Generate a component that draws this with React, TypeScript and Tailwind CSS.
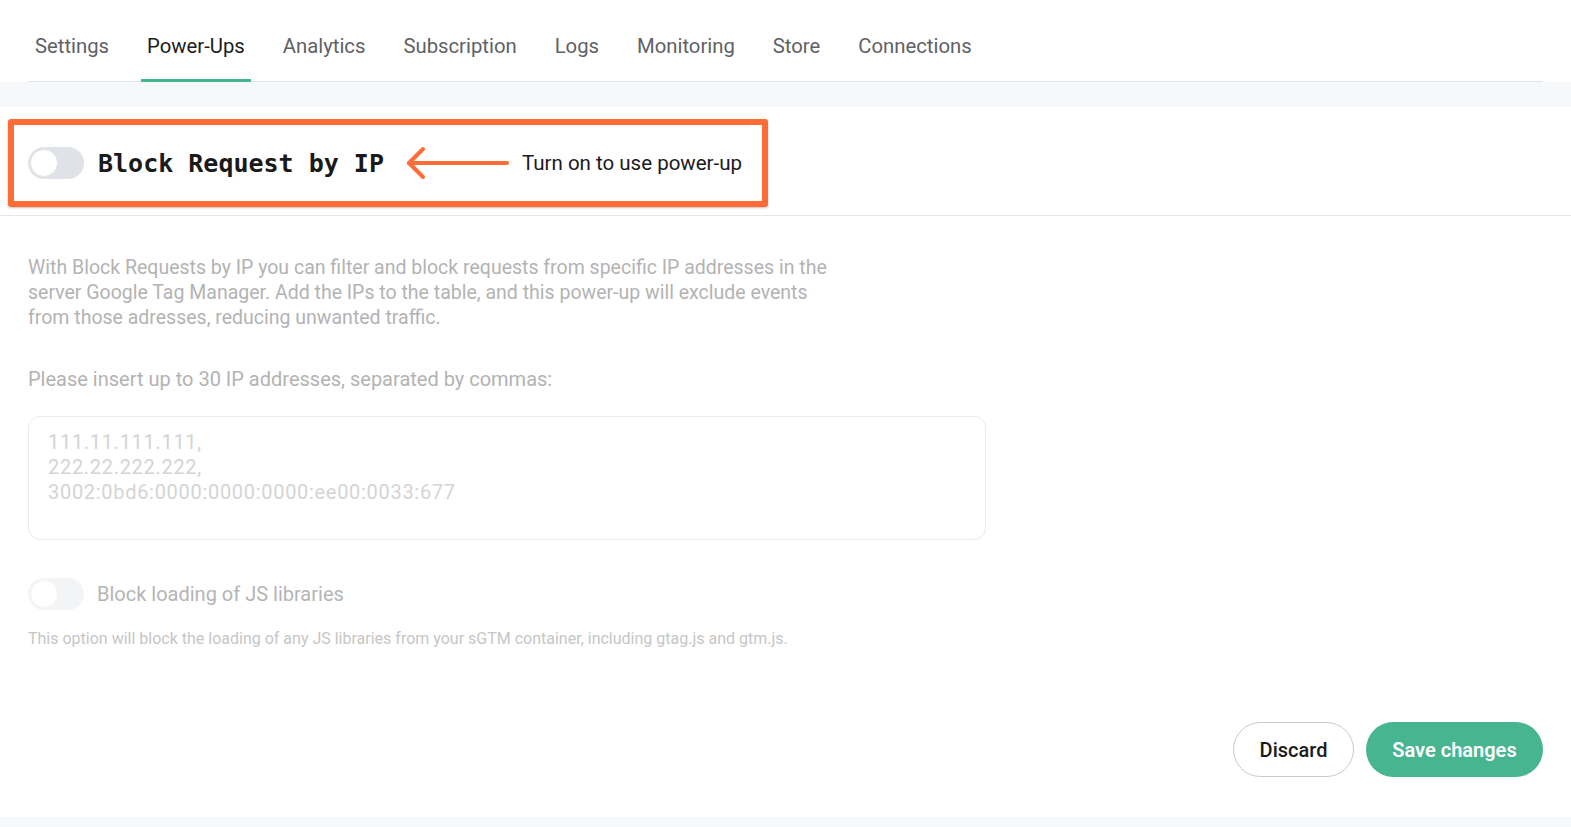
import React from "react";

const tabs = [
	"Settings",
	"Power-Ups",
	"Analytics",
	"Subscription",
	"Logs",
	"Monitoring",
	"Store",
	"Connections",
];

function Toggle({ faded }: { faded?: boolean }) {
	return (
		<div
			className={`w-[56px] h-[32px] rounded-full flex items-center px-[2px] shrink-0 ${
				faded ? "bg-[#f3f4f5]" : "bg-[#dfe2e6]"
			}`}
		>
			<div
				className={`w-[28px] h-[28px] rounded-full bg-white border ${
					faded ? "border-[#f3f4f5]" : "border-[#e4e6e9]"
				}`}
			></div>
		</div>
	);
}

export default function App() {
	return (
		<div
			className="h-[827px] w-full flex flex-col bg-white"
			style={{ fontFamily: "Roboto, 'Noto Sans', sans-serif" }}
		>
			{/* tabs */}
			<div className="mx-[28px] border-b border-[#e3e5e8] flex gap-[26px] pl-px">
				{tabs.map((t) => (
					<div
						key={t}
						className={`h-[82px] pt-[13px] px-[6px] flex items-center text-[20.3px] border-b-[3px] -mb-px ${
							t === "Power-Ups"
								? "border-[#45b58f] text-[#1c1c1c]"
								: "border-transparent text-[#5f6166]"
						}`}
					>
						{t}
					</div>
				))}
			</div>
			<div className="h-[25px] bg-[#f7f8fa]"></div>

			{/* panel */}
			<div className="flex-1 flex flex-col">
				<div className="mt-[12px] ml-[8px] w-[760px] h-[88px] border-[6px] border-[#ff6b35] rounded-[3px] shadow-[0_1px_2px_rgba(0,0,0,0.25)] flex items-center pl-[14px]">
					<Toggle />
					<span
						className="ml-[14px] text-[25px] font-bold text-[#1a1a1a] leading-none"
						style={{ fontFamily: "'DejaVu Sans Mono', monospace" }}
					>
						Block Request by IP
					</span>
					<svg
						width="104"
						height="34"
						viewBox="0 0 104 34"
						className="ml-[22px]"
						fill="none"
						stroke="#ff6b35"
						strokeWidth="4"
						strokeLinecap="round"
						strokeLinejoin="round"
					>
						<path d="M3 17H101" />
						<path d="M17 3L3 17L17 31" />
					</svg>
					<span className="ml-[12px] text-[20.5px] text-[#1a1a1a]">
						Turn on to use power-up
					</span>
				</div>
				<div className="mt-[8px] border-b border-[#e5e7ea]"></div>

				<div className="px-[28px] flex flex-col flex-1">
					<p className="mt-[39px] w-[815px] text-[19.5px] leading-[25px] text-[#b3b3b3]">
						With Block Requests by IP you can filter and block requests from
						specific IP addresses in the server Google Tag Manager. Add the
						IPs to the table, and this power-up will exclude events from those
						adresses, reducing unwanted traffic.
					</p>
					<p className="mt-[37px] text-[20px] leading-[25px] text-[#b3b3b3]">
						Please insert up to 30 IP addresses, separated by commas:
					</p>
					<textarea
						className="mt-[24px] w-[958px] h-[124px] rounded-[12px] border border-[#ebebeb] px-[19px] pt-[13px] text-[20px] tracking-[0.7px] leading-[25px] resize-none outline-none placeholder:text-[#d4d4d4]"
						placeholder={
							"111.11.111.111,\n222.22.222.222,\n3002:0bd6:0000:0000:0000:ee00:0033:677"
						}
					></textarea>

					<div className="mt-[38px] flex items-center">
						<Toggle faded />
						<span className="ml-[13px] text-[20px] text-[#b5b5b5]">
							Block loading of JS libraries
						</span>
					</div>
					<p className="mt-[17px] text-[16px] text-[#c6c6c6]">
						This option will block the loading of any JS libraries from your
						sGTM container, including gtag.js and gtm.js.
					</p>

					<div className="mt-auto mb-[40px] flex justify-end gap-[12px]">
						<button className="w-[121px] h-[55px] rounded-full border border-[#c5cad0] text-[20px] font-medium text-[#1a1a1a]">
							Discard
						</button>
						<button className="w-[177px] h-[55px] rounded-full bg-[#46b590] text-[20px] font-semibold text-white">
							Save changes
						</button>
					</div>
				</div>
			</div>
			<div className="h-[10px] bg-[#f7f8fa]"></div>
		</div>
	);
}
